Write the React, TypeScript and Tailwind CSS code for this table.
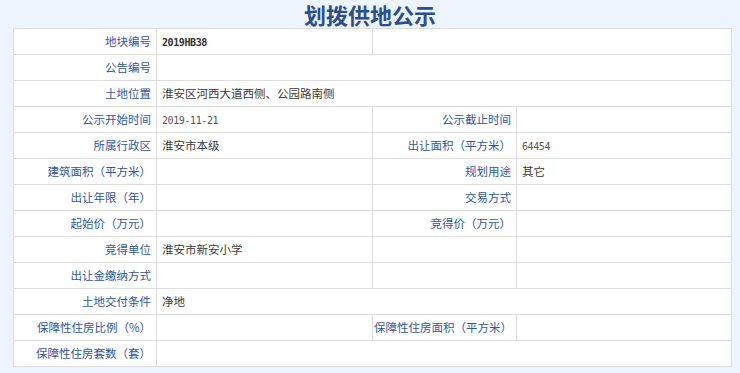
import React from "react";

const cjk = "font-['Noto_Sans_CJK_SC',sans-serif]";
const mono = "font-['DejaVu_Sans_Mono',monospace]";

function Label({ children, className = "" }: { children?: React.ReactNode; className?: string }) {
  return (
    <td className={`border border-[#dcdcdc] text-right pr-[5px] text-[#2f56a6] whitespace-nowrap ${className}`}>
      {children}
    </td>
  );
}

function Value({ children, span = 1 }: { children?: React.ReactNode; span?: number }) {
  return (
    <td colSpan={span} className="border border-[#dcdcdc] pl-[5px] text-[#3a3a3a] whitespace-nowrap">
      {children}
    </td>
  );
}

function Num({ children, bold = false }: { children: React.ReactNode; bold?: boolean }) {
  return (
    <span className={`${mono} text-[10px] tracking-[-0.4px] ${bold ? "font-bold text-[#333]" : "text-[#555]"}`}>
      {children}
    </span>
  );
}

export default function App() {
  return (
    <main className={`w-[740px] h-[373px] bg-[#eef4fd] overflow-hidden ${cjk}`}>
      <h1 className="h-[28px] pt-[3px] leading-[22px] text-center text-[22px] font-bold text-[#2c4e8e]">
        划拨供地公示
      </h1>
      <div className="px-[13px]">
        <table className="w-[718px] table-fixed border-collapse bg-white text-[11.5px] border border-[#d2d2d2]">
          <colgroup>
            <col className="w-[143px]" />
            <col className="w-[216px]" />
            <col className="w-[144px]" />
            <col className="w-[215px]" />
          </colgroup>
          <tbody className="[&>tr]:h-[26px]">
            <tr>
              <Label>地块编号</Label>
              <Value><Num bold>2019HB38</Num></Value>
              <Value span={2} />
            </tr>
            <tr>
              <Label>公告编号</Label>
              <Value span={3} />
            </tr>
            <tr>
              <Label>土地位置</Label>
              <Value span={3}>淮安区河西大道西侧、公园路南侧</Value>
            </tr>
            <tr>
              <Label>公示开始时间</Label>
              <Value><Num>2019-11-21</Num></Value>
              <Label>公示截止时间</Label>
              <Value />
            </tr>
            <tr>
              <Label>所属行政区</Label>
              <Value>淮安市本级</Value>
              <Label>出让面积（平方米）</Label>
              <Value><Num>64454</Num></Value>
            </tr>
            <tr>
              <Label>建筑面积（平方米）</Label>
              <Value />
              <Label>规划用途</Label>
              <Value>其它</Value>
            </tr>
            <tr>
              <Label>出让年限（年）</Label>
              <Value />
              <Label>交易方式</Label>
              <Value />
            </tr>
            <tr>
              <Label>起始价（万元）</Label>
              <Value />
              <Label>竞得价（万元）</Label>
              <Value />
            </tr>
            <tr>
              <Label>竞得单位</Label>
              <Value>淮安市新安小学</Value>
              <Value />
              <Value />
            </tr>
            <tr>
              <Label>出让金缴纳方式</Label>
              <Value />
              <Value />
              <Value />
            </tr>
            <tr>
              <Label>土地交付条件</Label>
              <Value span={3}>净地</Value>
            </tr>
            <tr>
              <Label>保障性住房比例（%）</Label>
              <Value />
              <Label className="!text-left !pr-0 pl-[1px] overflow-visible">保障性住房面积（平方米）</Label>
              <Value />
            </tr>
            <tr>
              <Label>保障性住房套数（套）</Label>
              <Value span={3} />
            </tr>
          </tbody>
        </table>
      </div>
    </main>
  );
}
